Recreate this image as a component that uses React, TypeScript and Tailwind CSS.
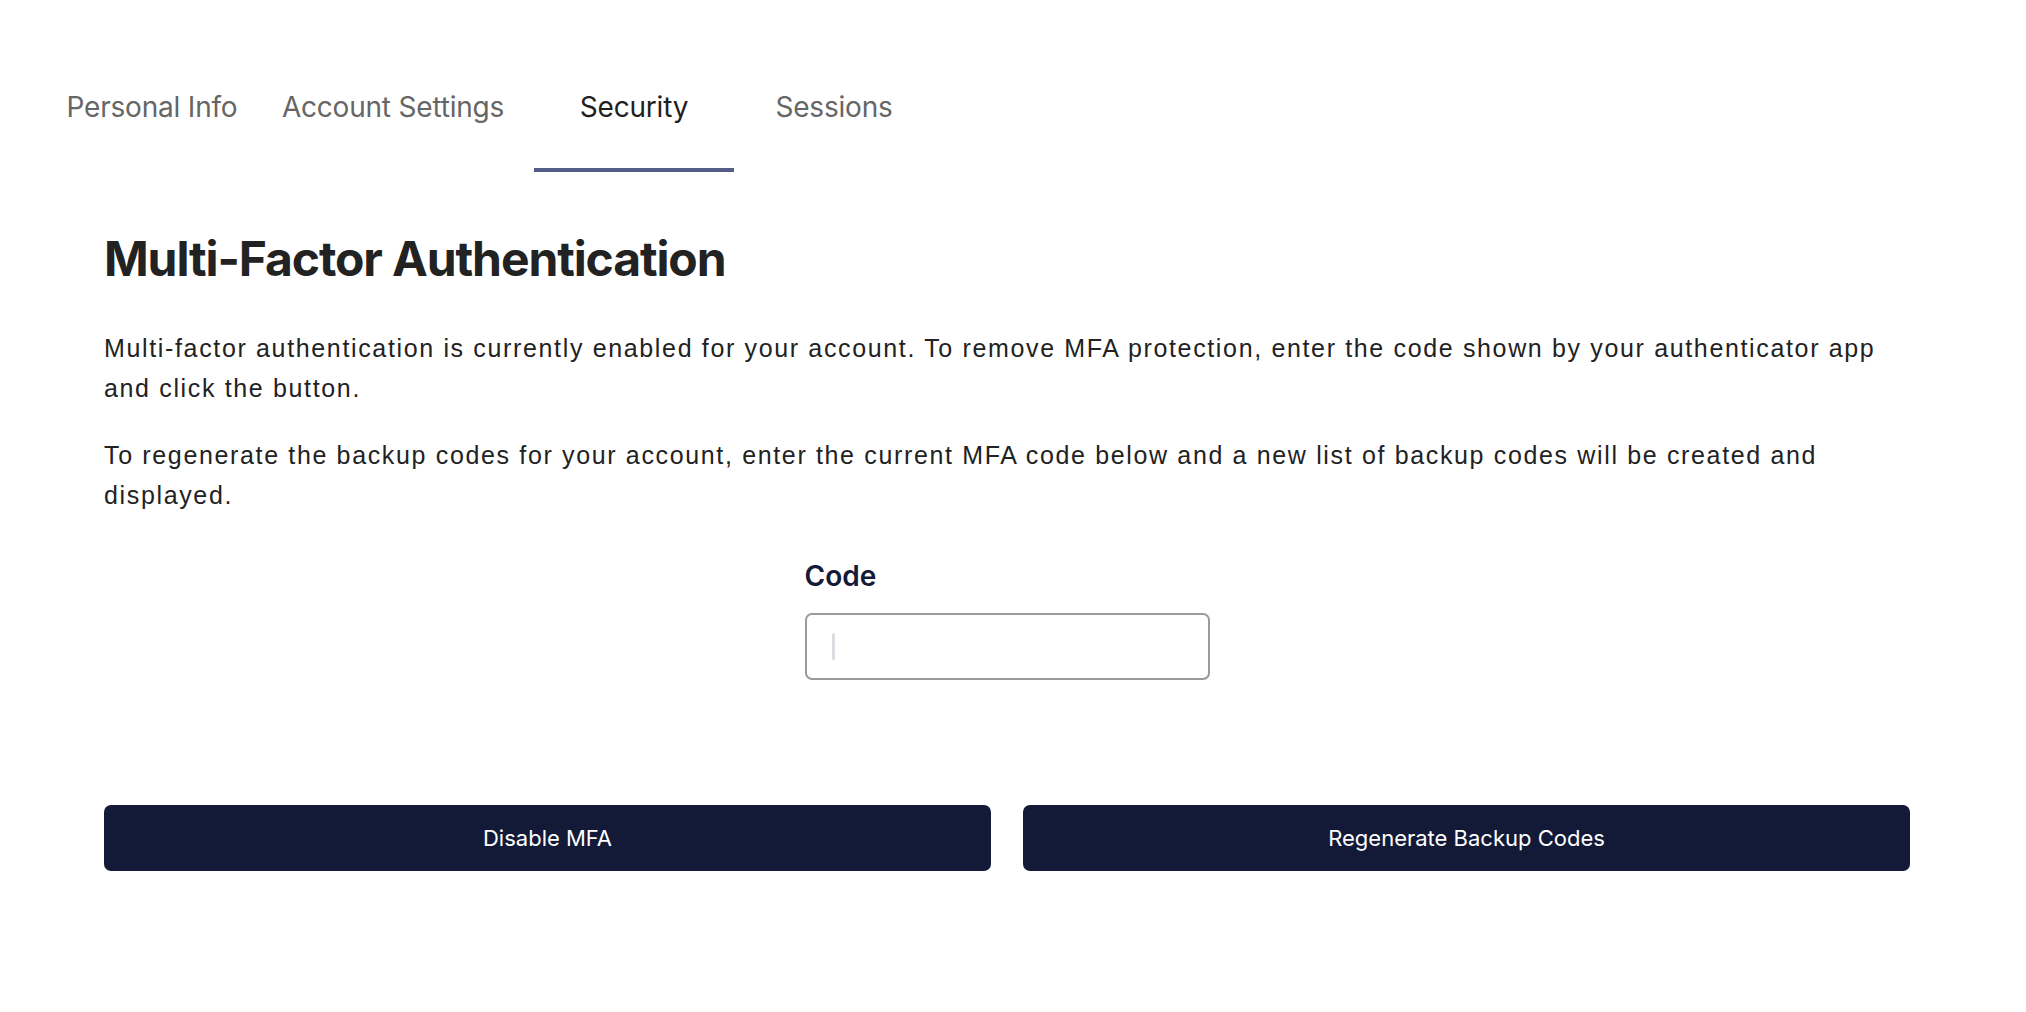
import { useState } from "react";

const tabs = [
  { label: "Personal Info", width: "w-[200px]" },
  { label: "Account Settings", width: "w-[282px]" },
  { label: "Security", width: "w-[200px]" },
  { label: "Sessions", width: "w-[200px]" },
];

export default function App() {
  const [active, setActive] = useState("Security");
  const [code, setCode] = useState("");

  return (
    <div className="min-h-screen bg-white font-['Inter',sans-serif]">
      {/* Tabs */}
      <div className="flex pl-[52px]">
        {tabs.map((t) => (
          <button
            key={t.label}
            onClick={() => setActive(t.label)}
            className={`${t.width} pt-[90px] pb-[44px] border-b-4 text-[28px] leading-[34px] tracking-[-0.2px] ${
              active === t.label
                ? "border-[#525d88] text-[#1f1f1f]"
                : "border-transparent text-[#666666]"
            }`}
          >
            {t.label}
          </button>
        ))}
      </div>

      <div className="pl-[104px] w-[1910px]">
        <h1 className="mt-[58px] text-[48px] leading-[58px] font-bold text-[#222222] tracking-[-1.1px]">
          Multi-Factor Authentication
        </h1>

        <div className="mt-[40px] font-['Liberation_Sans',Arial,sans-serif] text-[25px] leading-[40px] text-[#222222] tracking-[1.65px]">
          <p>
            Multi-factor authentication is currently enabled for your account. To remove MFA
            protection, enter the code shown by your authenticator app and click the button.
          </p>
          <p className="mt-[27px]">
            To regenerate the backup codes for your account, enter the current MFA code below and a
            new list of backup codes will be created and displayed.
          </p>
        </div>

        {/* Code field */}
        <div className="mt-[44px] flex justify-center">
          <div className="w-[405px]">
            <label className="block text-[28px] leading-[34px] font-semibold text-[#121a38]">
              Code
            </label>
            <div className="relative mt-[20px]">
              <input
                value={code}
                onChange={(e) => setCode(e.target.value)}
                className="w-full h-[67px] rounded-[7px] border-2 border-[#9a9a9a] px-[26px] text-[24px] outline-none"
              />
              {code === "" && (
                <span className="absolute left-[27px] top-[20px] w-[3px] h-[27px] rounded-sm bg-[#dcdce2]" />
              )}
            </div>
          </div>
        </div>

        {/* Actions */}
        <div className="mt-[125px] grid grid-cols-2 gap-[32px]">
          <button className="h-[66px] rounded-[7px] bg-[#121a38] text-white text-[22px]">
            Disable MFA
          </button>
          <button className="h-[66px] rounded-[7px] bg-[#121a38] text-white text-[22px]">
            Regenerate Backup Codes
          </button>
        </div>
      </div>
    </div>
  );
}
